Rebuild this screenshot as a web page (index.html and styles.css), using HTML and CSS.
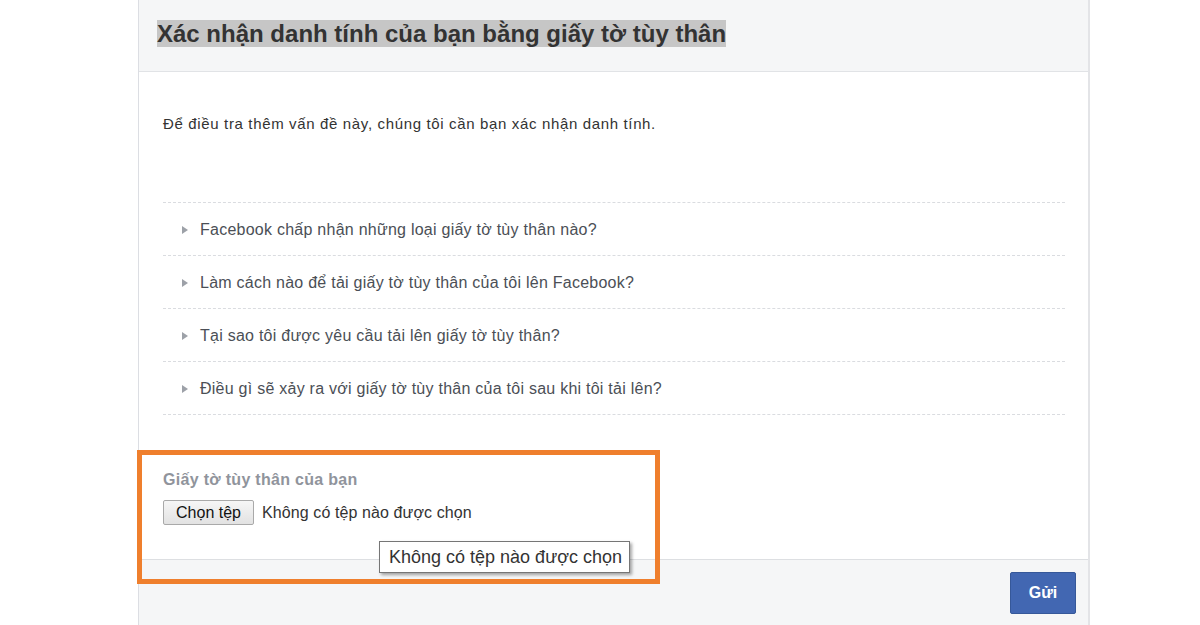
FILE: index.html
```html
<!DOCTYPE html>
<html lang="vi">
<head>
<meta charset="utf-8">
<title>Xác nhận danh tính</title>
<link rel="stylesheet" href="styles.css">
</head>
<body>
<div class="dialog">
  <div class="dlg-header">
    <h1 class="dlg-title"><span class="sel">Xác nhận danh tính của bạn bằng giấy tờ tùy thân</span></h1>
  </div>
  <div class="dlg-body">
    <p class="intro">Để điều tra thêm vấn đề này, chúng tôi cần bạn xác nhận danh tính.</p>
    <ul class="faq">
      <li><span class="tri"></span>Facebook chấp nhận những loại giấy tờ tùy thân nào?</li>
      <li><span class="tri"></span>Làm cách nào để tải giấy tờ tùy thân của tôi lên Facebook?</li>
      <li><span class="tri"></span>Tại sao tôi được yêu cầu tải lên giấy tờ tùy thân?</li>
      <li><span class="tri"></span>Điều gì sẽ xảy ra với giấy tờ tùy thân của tôi sau khi tôi tải lên?</li>
    </ul>
    <div class="field-label">Giấy tờ tùy thân của bạn</div>
    <div class="file-row">
      <span class="file-btn">Chọn tệp</span>
      <span class="file-none">Không có tệp nào được chọn</span>
    </div>
  </div>
  <div class="dlg-footer">
    <span class="send-btn">Gửi</span>
  </div>
</div>
<div class="highlight-box"></div>
<div class="tooltip">Không có tệp nào được chọn</div>
</body>
</html>
```
FILE: styles.css
```css
html, body {
  margin: 0;
  padding: 0;
  background: #ffffff;
  font-family: "Liberation Sans", Arial, sans-serif;
  overflow: hidden;
}
.dialog {
  margin-left: 138px;
  width: 949px;
  border-left: 1px solid #dcdee3;
  border-right: 2px solid #e3e4e7;
  min-height: 640px;
  background: #fff;
}
.dlg-header {
  background: #f5f6f7;
  border-bottom: 1px solid #e1e3e6;
  padding: 20px 18px 24px;
}
.dlg-title {
  margin: 0;
  font-size: 24px;
  line-height: 27px;
  font-weight: bold;
  color: #333;
}
.sel {
  background: #c6c6c6;
}
.dlg-body {
  padding: 43px 23px 34px 24px;
}
.intro {
  margin: 0;
  font-size: 15px;
  line-height: 18px;
  color: #333;
  letter-spacing: 0.65px;
}
.faq {
  list-style: none;
  margin: 69px 0 0;
  padding: 0;
}
.faq li {
  border-top: 1px dashed #dadce0;
  display: flex;
  align-items: center;
  font-size: 16px;
  letter-spacing: 0.25px;
  color: #4b4f56;
  padding-left: 19px;
  padding-top: 2px;
  box-sizing: border-box;
  height: 53px;
}
.faq li:last-child {
  border-bottom: 1px dashed #dadce0;
  height: 54px;
}
.tri {
  width: 0;
  height: 0;
  border-top: 4px solid transparent;
  border-bottom: 4px solid transparent;
  border-left: 6px solid #9da1a8;
  margin-right: 12px;
}
.field-label {
  margin-top: 56px;
  font-size: 16px;
  line-height: 18px;
  font-weight: bold;
  letter-spacing: 0.3px;
  color: #90949c;
}
.file-row {
  margin-top: 11px;
  display: flex;
  align-items: center;
  gap: 8px;
}
.file-btn {
  box-sizing: border-box;
  width: 91px;
  height: 25px;
  display: flex;
  align-items: center;
  justify-content: center;
  border: 1px solid #a9a9a9;
  border-radius: 2px;
  background: linear-gradient(#f6f6f6, #e2e2e2);
  font-size: 16px;
  color: #111;
}
.file-none {
  font-size: 16px;
  letter-spacing: 0.1px;
  color: #333;
}
.dlg-footer {
  border-top: 1px solid #dddfe2;
  background: #f5f6f7;
  padding: 12px 12px 20px;
  display: flex;
  justify-content: flex-end;
}
.send-btn {
  box-sizing: border-box;
  width: 66px;
  height: 42px;
  display: flex;
  align-items: center;
  justify-content: center;
  background: #4267b2;
  border: 1px solid #365899;
  border-radius: 2px;
  color: #fff;
  font-weight: bold;
  font-size: 16px;
}
.highlight-box {
  position: absolute;
  left: 137px;
  top: 450px;
  width: 523px;
  height: 134px;
  box-sizing: border-box;
  border: 5px solid #ef7f2d;
}
.tooltip {
  position: absolute;
  left: 379px;
  top: 541px;
  width: 251px;
  height: 32px;
  box-sizing: border-box;
  border: 1px solid #767676;
  background: #fff;
  box-shadow: 2px 2px 3px rgba(0,0,0,0.35);
  font-size: 18px;
  color: #333;
  display: flex;
  align-items: center;
  padding-left: 9px;
}
```
